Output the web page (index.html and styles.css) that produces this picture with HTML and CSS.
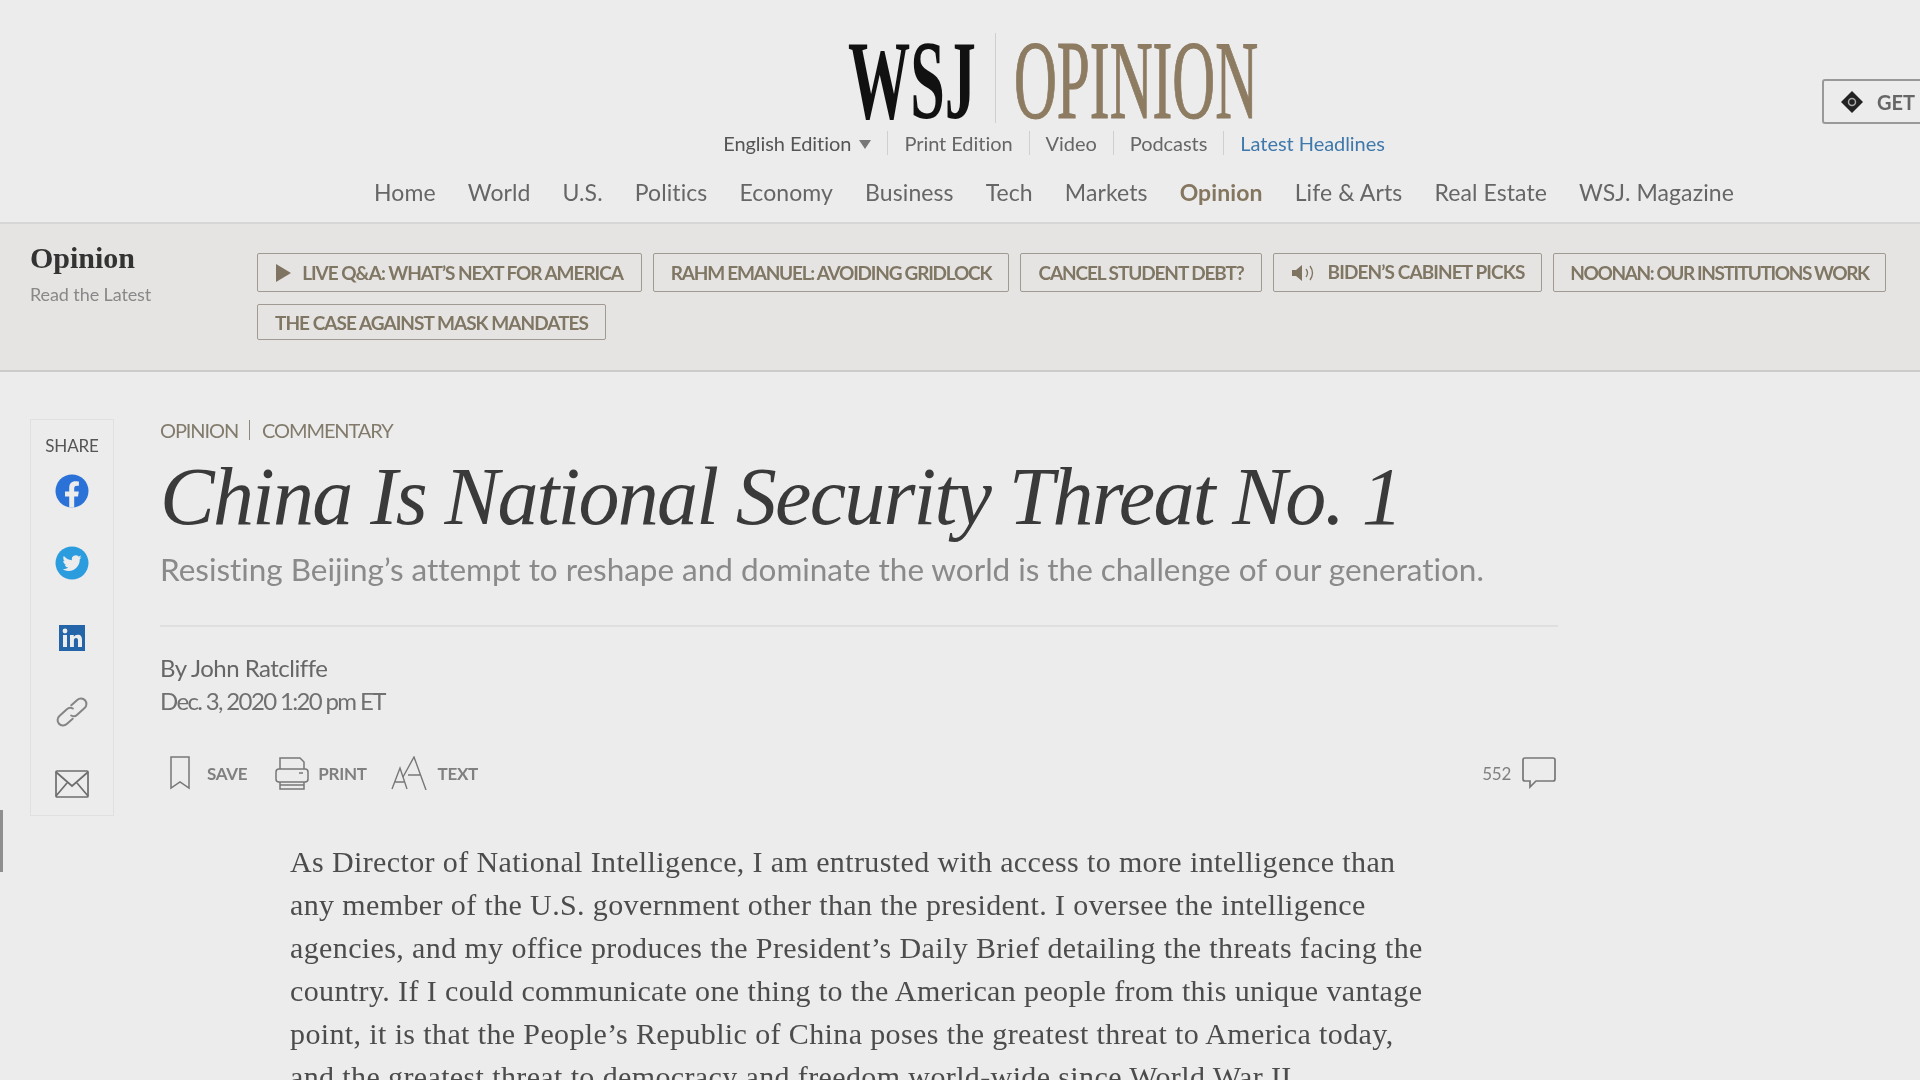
FILE: index.html
```html
<!DOCTYPE html>
<html lang="en">
<head>
<meta charset="utf-8">
<title>China Is National Security Threat No. 1 - WSJ</title>
<link rel="stylesheet" href="styles.css">
</head>
<body>
<div class="page">
  <header class="masthead">
    <svg class="logo" width="420" height="92" viewBox="0 0 420 92">
      <text class="logo-wsj" x="0" y="85" textLength="128" lengthAdjust="spacingAndGlyphs">WSJ</text>
      <rect class="logo-div" x="147" y="0" width="1" height="90"/>
      <text class="logo-op" x="166" y="85" textLength="244" lengthAdjust="spacingAndGlyphs">OPINION</text>
    </svg>
    <ul class="toplinks">
      <li>English Edition <span class="caret"></span></li>
      <li>Print Edition</li>
      <li>Video</li>
      <li>Podcasts</li>
      <li class="blue">Latest Headlines</li>
    </ul>
    <nav class="mainnav">
      <span>Home</span><span>World</span><span>U.S.</span><span>Politics</span><span>Economy</span><span>Business</span><span>Tech</span><span>Markets</span><span class="active">Opinion</span><span>Life &amp; Arts</span><span>Real Estate</span><span>WSJ. Magazine</span>
    </nav>
    <div class="get">
      <svg width="22" height="22" viewBox="0 0 22 22"><path d="M11 0l11 11-11 11L0 11z" fill="#222"/><circle cx="11" cy="11" r="3.5" fill="none" stroke="#aaa" stroke-width="1.5"/></svg>
      <span>GET</span>
    </div>
  </header>

  <section class="band">
    <div class="band-title">
      <div class="band-name">Opinion</div>
      <div class="band-sub">Read the Latest</div>
    </div>
    <div class="chips">
      <div class="chip w1"><svg width="15" height="18" viewBox="0 0 15 18"><path d="M0 0l15 9-15 9z" fill="#7f7462"/></svg>LIVE Q&amp;A: WHAT’S NEXT FOR AMERICA</div>
      <div class="chip w2">RAHM EMANUEL: AVOIDING GRIDLOCK</div>
      <div class="chip w3">CANCEL STUDENT DEBT?</div>
      <div class="chip w4"><svg width="26" height="20" viewBox="0 0 26 20"><path d="M1 7h4l6-5v16l-6-5H1z" fill="#7f7462"/><path d="M15 6q3 4 0 8M19 3q5 7 0 14" fill="none" stroke="#7f7462" stroke-width="1.3"/></svg><span class="raised">BIDEN’S CABINET PICKS</span></div>
      <div class="chip w5">NOONAN: OUR INSTITUTIONS WORK</div>
      <div class="chip w6 short">THE CASE AGAINST MASK MANDATES</div>
    </div>
  </section>

  <div class="content">
    <aside class="share">
      <div class="share-label">SHARE</div>
      <svg class="ic-fb" width="34" height="34" viewBox="0 0 34 34"><circle cx="17" cy="17" r="16.5" fill="#2a72d8"/><path d="M14.2 33.5V22.5H10v-5h4.2v-3.7c0-4.2 2.5-6.5 6.3-6.5 1.8 0 3.4.3 3.4.3v4.2h-2c-2 0-2.7 1.300-2.7 2.600v3.100h4.600l-.8 5h-3.800v11z" fill="#ececec"/></svg>
      <svg class="ic-tw" width="34" height="34" viewBox="0 0 34 34"><circle cx="17" cy="17" r="16.500" fill="#2b9ddf"/><g transform="translate(7.500 7.500) scale(.8)"><path d="M23.953 4.570a10 10 0 01-2.825.775 4.958 4.958 0 002.163-2.723c-.951.555-2.005.959-3.127 1.184a4.920 4.920 0 00-8.384 4.482C7.690 8.095 4.067 6.130 1.640 3.162a4.822 4.822 0 00-.666 2.475c0 1.710.870 3.213 2.188 4.096a4.904 4.904 0 01-2.228-.616v.060a4.923 4.923 0 003.946 4.827 4.996 4.996 0 01-2.212.085 4.936 4.936 0 004.604 3.417 9.867 9.867 0 01-6.102 2.105c-.390 0-.779-.023-1.170-.067a13.995 13.995 0 007.557 2.209c9.053 0 13.998-7.496 13.998-13.985 0-.210 0-.420-.015-.630A9.935 9.935 0 0024 4.590z" fill="#ececec"/></g></svg>
      <svg class="ic-li" width="26" height="26" viewBox="0 0 26 26"><rect width="26" height="26" fill="#2464a8"/><rect x="4" y="10" width="4" height="12" fill="#ececec"/><circle cx="6" cy="6" r="2.400" fill="#ececec"/><path d="M11 10h3.800v1.800c.8-1.300 2.200-2.100 3.900-2.100 3.300 0 4.300 2 4.300 5.300V22h-4v-6.200c0-1.700-.5-2.700-1.900-2.700-1.600 0-2.200 1.100-2.200 2.800V22h-3.900z" fill="#ececec"/></svg>
      <svg class="ic-link" width="36" height="36" viewBox="-18 -18 36 36"><g transform="rotate(-42)" fill="none" stroke="#858585" stroke-width="2" stroke-linecap="round"><path d="M-4 5.500H-12a5.500 5.500 0 0 1 0-11H-2a5 5 0 0 1 5 3.500"/><path d="M4-5.500H12a5.500 5.500 0 0 1 0 11H2a5 5 0 0 1-5-3.500"/></g></svg>
      <svg class="ic-mail" width="34" height="28" viewBox="0 0 34 28"><g fill="none" stroke="#6e6e6e" stroke-width="1.700"><rect x="1" y="1" width="32" height="26" rx="1"/><path d="M1 2l16 14L33 2M1 26l11-13M33 26L22 13"/></g></svg>
    </aside>

    <main class="article">
      <div class="crumbs"><span>OPINION</span><i></i><span>COMMENTARY</span></div>
      <h1>China Is National Security Threat No. 1</h1>
      <h2>Resisting Beijing’s attempt to reshape and dominate the world is the challenge of our generation.</h2>
      <hr class="rule">
      <div class="byline">By John Ratcliffe</div>
      <div class="dateline">Dec. 3, 2020 1:20 pm ET</div>
      <div class="tools">
        <div class="tool t-save"><svg width="22" height="34" viewBox="0 0 22 34"><path d="M2 1h18v31l-9-6-9 6z" fill="none" stroke="#777" stroke-width="1.500"/></svg><span>SAVE</span></div>
        <div class="tool t-print"><svg width="34" height="34" viewBox="0 0 34 34"><g fill="none" stroke="#777" stroke-width="1.500"><path d="M5 13V2h20l4 4v7"/><rect x="1" y="13" width="32" height="13" rx="3"/><path d="M5 26v7h24v-7M5 29h24"/><path d="M24 17h4"/></g></svg><span>PRINT</span></div>
        <div class="tool t-text"><svg width="36" height="34" viewBox="0 0 36 34"><g fill="none" stroke="#777" stroke-width="1.400"><path d="M1 33l8-21 7 21M4 26h9"/><path d="M12 21L23 1l12 33M17 19h13"/></g></svg><span>TEXT</span></div>
        <div class="comments"><span>552</span><svg width="34" height="32" viewBox="0 0 34 32"><path d="M3 1h28q2 0 2 2v19q0 2-2 2H14l-6 6v-6H3q-2 0-2-2V3q0-2 2-2z" fill="none" stroke="#777" stroke-width="1.700"/></svg></div>
      </div>
      <p class="body">As Director of National Intelligence, I am entrusted with access to more intelligence than<br>any member of the U.S. government other than the president. I oversee the intelligence<br>agencies, and my office produces the President’s Daily Brief detailing the threats facing the<br>country. If I could communicate one thing to the American people from this unique vantage<br>point, it is that the People’s Republic of China poses the greatest threat to America today,<br>and the greatest threat to democracy and freedom world-wide since World War II.</p>
    </main>
  </div>
  <div class="edgebar"></div>
</div>
</body>
</html>
```
FILE: styles.css
```css
* { box-sizing: border-box; }
html, body { margin: 0; padding: 0; height: 100%; overflow: hidden; background: #ececec; }
.page { position: relative; width: 2108px; height: 1080px; overflow: hidden; background: #ececec; font-family: Lato, "Liberation Sans", sans-serif; color: #555; filter: blur(0.7px); }

.masthead { position: relative; height: 224px; padding-top: 33px; display: flex; flex-direction: column; align-items: center; border-bottom: 2px solid #d6d6d6; }
.logo { display: block; margin-left: 8px; overflow: visible; }
.logo-wsj { font-family: "Liberation Serif", serif; font-weight: 700; font-size: 112px; fill: #111; }
.logo-op { font-family: "Liberation Serif", serif; font-size: 112px; fill: #8d7c62; stroke: #8d7c62; stroke-width: 1.2px; }
.logo-div { fill: #cfcfcf; }

.toplinks { list-style: none; margin: 5px 0 0; padding: 0; display: flex; height: 26px; align-items: center; font-size: 20px; letter-spacing: -.05px; color: #666; }
.toplinks li { padding: 0 16px; border-left: 1px solid #cfcfcf; line-height: 24px; }
.toplinks li:first-child { border-left: 0; color: #555; }
.toplinks .blue { color: #3f78ab; }
.caret { display: inline-block; width: 0; height: 0; border-left: 6px solid transparent; border-right: 6px solid transparent; border-top: 9px solid #777; margin-left: 3px; vertical-align: 2px; }

.mainnav { display: flex; gap: 32px; margin-top: 22px; font-size: 23px; letter-spacing: .1px; line-height: 28px; color: #666; }
.mainnav .active { font-weight: 700; color: #85765f; }

.get { position: absolute; left: 1822px; top: 79px; width: 200px; height: 45px; border: 2px solid #999; border-radius: 3px; display: flex; align-items: center; gap: 14px; padding-left: 17px; font-weight: 700; font-size: 20px; color: #666; }

.band { height: 148px; background: #e6e4e2; border-bottom: 2px solid #cbcbcb; display: flex; padding: 29px 0 0 30px; }
.band-title { width: 227px; }
.band-name { font-family: "Liberation Serif", serif; font-weight: 700; font-size: 30px; line-height: 30px; margin-top: -10px; color: #333; }
.band-sub { font-size: 18px; letter-spacing: -.1px; line-height: 24px; margin-top: 9px; color: #888; }
.chips { width: 1660px; display: flex; flex-wrap: wrap; gap: 12px 11px; align-content: flex-start; align-items: flex-start; }
.chip { height: 39px; border: 1px solid #a09b92; border-radius: 2px; display: flex; align-items: center; justify-content: center; gap: 11px; font-size: 19px; font-weight: 700; color: #7f7664; white-space: nowrap; }
.chip.short { height: 36px; }
.raised { margin-top: -2px; }
.w1 { width: 385px; letter-spacing: -1.05px; }
.w2 { width: 356px; letter-spacing: -1.23px; }
.w3 { width: 242px; letter-spacing: -1.1px; }
.w4 { width: 269px; letter-spacing: -.9px; }
.w5 { width: 333px; letter-spacing: -1.4px; }
.w6 { width: 349px; letter-spacing: -.97px; }

.content { display: flex; padding: 47px 0 0 30px; }
.share { width: 84px; height: 397px; border: 1px solid #e0e0e0; display: flex; flex-direction: column; align-items: center; flex: none; }
.share-label { font-size: 17px; letter-spacing: -.1px; line-height: 20px; margin-top: 16px; color: #555; }
.share svg { display: block; flex: none; }
.ic-fb { margin-top: 18px; }
.ic-tw { margin-top: 38px; }
.ic-li { margin-top: 45px; }
.ic-link { margin-top: 43px; }
.ic-mail { margin-top: 40px; }

.article { margin-left: 46px; width: 1398px; }
.crumbs { display: flex; align-items: center; font-size: 20px; letter-spacing: -1.1px; line-height: 24px; color: #827b6c; margin-top: -1px; }
.crumbs i { width: 1px; height: 20px; background: #8d877a; margin: 0 12px 0 11px; }
h1 { margin: 9px 0 0; font-family: "Liberation Serif", serif; font-style: italic; font-weight: 400; font-size: 82px; letter-spacing: -1.8px; line-height: 92px; color: #3a3a3a; white-space: nowrap; }
h2 { margin: 6px 0 0; font-size: 31.5px; letter-spacing: -.03px; line-height: 40px; font-weight: 400; color: #8a8a8a; white-space: nowrap; }
.rule { margin: 36px 0 0; border: 0; height: 2px; background: #dfdfdf; }
.byline { margin-top: 25px; font-size: 24px; letter-spacing: -.5px; line-height: 32px; color: #666; }
.dateline { margin-top: 1px; font-size: 24px; letter-spacing: -1.65px; line-height: 32px; color: #707070; }
.tools { display: flex; align-items: center; margin-top: 38px; height: 36px; font-size: 17px; letter-spacing: -.3px; font-weight: 700; color: #808080; }
.tool { display: flex; align-items: center; }
.t-save { margin-left: 9px; gap: 16px; }
.t-print { margin-left: 28px; gap: 9px; }
.t-text { margin-left: 24px; gap: 11px; }
.comments { margin-left: auto; display: flex; align-items: center; gap: 11px; margin-right: 2px; font-weight: 400; }
.body { margin: 49px 0 0 130px; width: 1200px; font-family: "Liberation Serif", serif; font-size: 30px; letter-spacing: .38px; line-height: 43px; color: #4c4c4c; white-space: nowrap; }
.edgebar { position: absolute; left: 0; top: 810px; width: 3px; height: 62px; background: #8f8f8f; }
```
